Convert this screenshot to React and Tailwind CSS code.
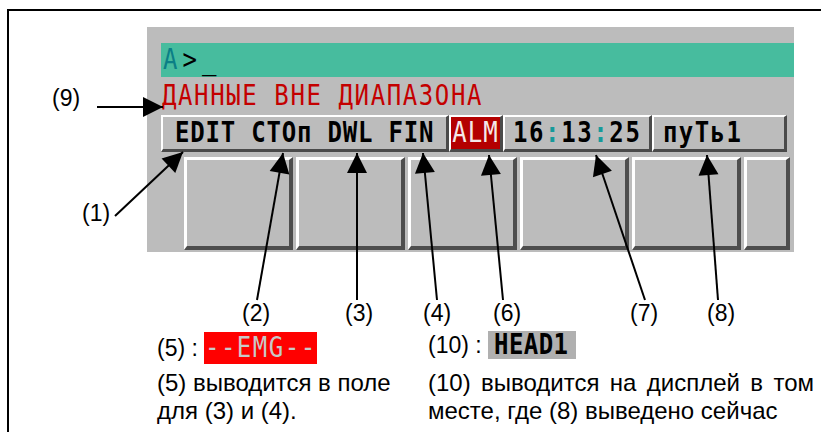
import React from "react";

const mono = { fontFamily: '"DejaVu Sans Mono", "Liberation Mono", monospace' };

const arrows = [
  { label: "(9)", tail: [97, 107], tip: [163, 107] },
  { label: "(1)", tail: [115, 216], tip: [183, 152] },
  { label: "(2)", tail: [257, 300], tip: [283, 153] },
  { label: "(3)", tail: [357, 300], tip: [357, 153] },
  { label: "(4)", tail: [437, 300], tip: [423, 153] },
  { label: "(6)", tail: [503, 300], tip: [489, 155] },
  { label: "(7)", tail: [645, 300], tip: [596, 155] },
  { label: "(8)", tail: [718, 300], tip: [707, 155] },
];

const head = ([x1, y1], [x2, y2], len = 20, half = 10) => {
  const dx = x2 - x1;
  const dy = y2 - y1;
  const d = Math.hypot(dx, dy);
  const ux = dx / d;
  const uy = dy / d;
  const bx = x2 - ux * len;
  const by = y2 - uy * len;
  return `${x2},${y2} ${bx - uy * half},${by + ux * half} ${bx + uy * half},${by - ux * half}`;
};

const Arrows = () => (
  <svg className="absolute inset-0 pointer-events-none" width="821" height="432">
    {arrows.map((a) => (
      <g key={a.label}>
        <line x1={a.tail[0]} y1={a.tail[1]} x2={a.tip[0]} y2={a.tip[1]} stroke="#000" strokeWidth="2" />
        <polygon points={head(a.tail, a.tip)} fill="#000" />
      </g>
    ))}
  </svg>
);

// tall pixel-ish CNC font
const Tall = ({ className = "", children }) => (
  <span className={`inline-block scale-y-[1.18] ${className}`}>{children}</span>
);

const Cell = ({ className = "", children }) => (
  <div
    className={`h-full flex items-center border-t-2 border-l-2 border-white border-b-[3px] border-r-[3px] border-b-[#4a4a4a] border-r-[#4a4a4a] ${className}`}
  >
    {children}
  </div>
);

const SoftKey = ({ w = "w-[109px]" }) => (
  <div className={`${w} h-full bg-[#bcbcbc] border-t-[3px] border-l-[3px] border-white border-b-4 border-r-4 border-b-[#4d4d4d] border-r-[#4d4d4d]`} />
);

const Screen = () => (
  <div className="w-[647px] h-[225px] bg-[#bcbcbc] flex flex-col pt-4">
    <div className="ml-[14px] h-[34px] bg-[#47bc9e] flex items-center pl-[2px] text-[24px] tracking-[5px]" style={mono}>
      <Tall className="text-[#0b7f86]">A</Tall>
      <Tall className="text-black">&gt;_</Tall>
    </div>
    <div className="ml-[15px] h-[38px] flex items-center text-[24px] tracking-[1.6px] text-[#c40000] whitespace-pre" style={mono}>
      <Tall>ДАННЫЕ ВНЕ ДИАПАЗОНА</Tall>
    </div>
    <div className="ml-[14px] h-[37px] flex text-[24px] font-bold text-black whitespace-pre" style={mono}>
      <Cell className="w-[288px] pl-[12px] tracking-[0.8px]">
        <Tall>EDIT СТОп DWL FIN</Tall>
      </Cell>
      <Cell className="w-[54px]">
        <div className="h-full w-full bg-[#b40000] flex items-center justify-center font-normal text-[#f4e8e8] tracking-[1px]">
          <Tall>ALM</Tall>
        </div>
      </Cell>
      <Cell className="w-[149px] pl-[8px] tracking-[1.6px]">
        <Tall>
          16<span className="text-[#169a9a]">:</span>13<span className="text-[#169a9a]">:</span>25
        </Tall>
      </Cell>
      <Cell className="w-[135px] pl-[9px] tracking-[1.4px]">
        <Tall>пуТь1</Tall>
      </Cell>
    </div>
    <div className="mt-[5px] ml-[37px] h-[93px] flex gap-[3px]">
      <SoftKey />
      <SoftKey />
      <SoftKey />
      <SoftKey />
      <SoftKey />
      <SoftKey w="w-[46px]" />
    </div>
  </div>
);

const labelPos = {
  "(9)": "left-[52px] top-[84px]",
  "(1)": "left-[82px] top-[199px]",
  "(2)": "left-[242px] top-[299px]",
  "(3)": "left-[345px] top-[299px]",
  "(4)": "left-[423px] top-[299px]",
  "(6)": "left-[493px] top-[299px]",
  "(7)": "left-[630px] top-[299px]",
  "(8)": "left-[707px] top-[299px]",
};

export default function App() {
  return (
    <div
      className="relative w-[821px] h-[432px] bg-white overflow-hidden text-black"
      style={{ fontFamily: '"Liberation Sans", Arial, sans-serif' }}
    >
      <div className="h-full pt-[9px] pl-[7px]">
        <div className="h-full border-t-2 border-l-2 border-black pt-4 pl-[138px]">
          <Screen />
          <div className="mt-[80px] flex text-[24px] leading-[28px]">
            <div className="ml-[10px] w-[271px]">
              <div className="h-[32px] flex items-center">
                <span className="whitespace-pre text-[23px]">(5) : </span>
                <span
                  className="h-[32px] w-[113px] bg-[#ff0000] flex items-center justify-center text-[24px] text-[#c8c8c8] tracking-[1.5px]"
                  style={mono}
                >
                  <Tall>--EMG--</Tall>
                </span>
              </div>
              <div className="mt-[5px]">(5) выводится в поле</div>
              <div>для (3) и (4).</div>
            </div>
            <div className="w-[386px]">
              <div className="h-[28px] flex items-center mt-[-1px]">
                <span className="whitespace-pre text-[23px]">(10) : </span>
                <span
                  className="h-[28px] w-[88px] bg-[#b0b0b0] flex items-center pl-[6px] text-[24px] font-bold tracking-[0.4px]"
                  style={mono}
                >
                  <Tall>HEAD1</Tall>
                </span>
              </div>
              <div className="mt-[10px] text-justify [text-align-last:justify]">(10) выводится на дисплей в том</div>
              <div>месте, где (8) выведено сейчас</div>
            </div>
          </div>
        </div>
      </div>
      <Arrows />
      {arrows.map((a) => (
        <div key={a.label} className={`absolute text-[23px] leading-[28px] ${labelPos[a.label]}`}>
          {a.label}
        </div>
      ))}
    </div>
  );
}
